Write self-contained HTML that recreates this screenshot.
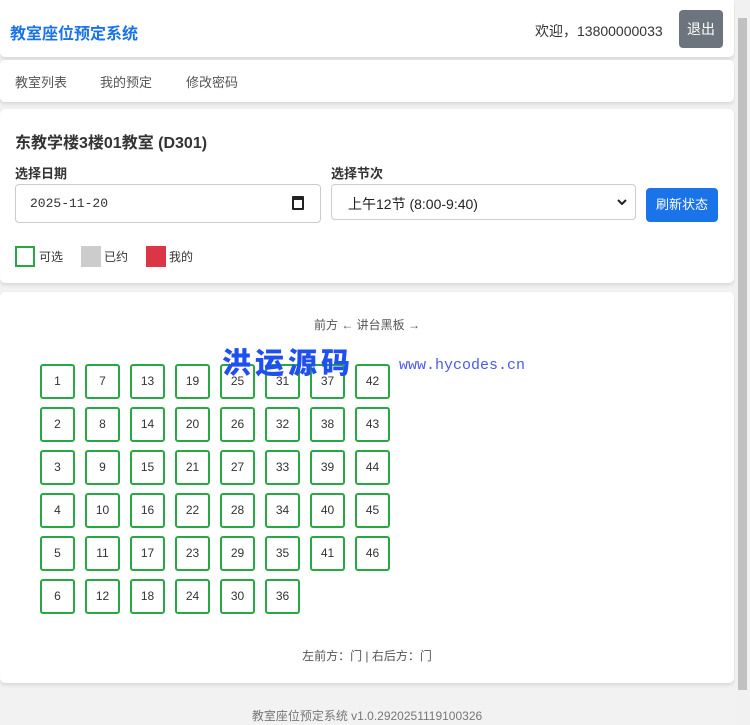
<!DOCTYPE html>
<html><head><meta charset="utf-8"><style>
*{box-sizing:border-box;margin:0;padding:0}
body{width:750px;height:725px;overflow:hidden;background:#f2f2f2;font-family:"Liberation Sans","Noto Sans CJK SC",sans-serif;color:#333;position:relative}
.card{position:absolute;left:0;width:734px;background:#fff;border-radius:5px;box-shadow:0 2px 4px rgba(0,0,0,.12)}
.sb{position:absolute;right:0;top:0;width:15px;height:725px;background:#f1f1f1}
.sb i{position:absolute;left:3px;top:18px;width:9px;height:672px;background:#c1c1c1}
.seat{position:absolute;width:35px;height:35px;border:2px solid #28a745;border-radius:3px;font-size:12px;text-align:center;line-height:31px;color:#333}
</style></head><body>
<div class="card" style="top:0;height:57px;border-radius:0 0 5px 5px">
 <div style="position:absolute;left:10px;top:20px;font-size:16px;font-weight:bold;color:#1a73e8">教室座位预定系统</div>
 <div style="position:absolute;left:535px;top:21px;font-size:14px;color:#333">欢迎，13800000033</div>
 <div style="position:absolute;left:679px;top:10px;width:44px;height:38px;background:#6c757d;border-radius:4px;color:#fff;font-size:14px;text-align:center;line-height:38px">退出</div>
</div>
<div class="card" style="top:60px;height:42px">
 <span style="position:absolute;left:15px;top:12px;font-size:13px;color:#555">教室列表</span>
 <span style="position:absolute;left:100px;top:12px;font-size:13px;color:#555">我的预定</span>
 <span style="position:absolute;left:186px;top:12px;font-size:13px;color:#555">修改密码</span>
</div>
<div class="card" style="top:109px;height:174px">
 <div style="position:absolute;left:15px;top:20px;font-size:16px;font-weight:bold;color:#333">东教学楼3楼01教室 (D301)</div>
 <div style="position:absolute;left:15px;top:54px;font-size:13px;font-weight:bold">选择日期</div>
 <div style="position:absolute;left:331px;top:54px;font-size:13px;font-weight:bold">选择节次</div>
 <div style="position:absolute;left:15px;top:75px;width:306px;height:39px;border:1px solid #ccc;border-radius:4px;font-family:'Liberation Mono',monospace;font-size:13px;padding:11px 14px">2025-11-20
  <span style="position:absolute;right:16px;top:11px;width:12px;height:14px;border:2px solid #222;border-top-width:4px;border-radius:1px"></span></div>
 <div style="position:absolute;left:331px;top:75px;width:305px;height:36px;border:1px solid #ccc;border-radius:4px;font-size:14px;padding:9px 16px;color:#222">上午12节 (8:00-9:40)<svg style="position:absolute;right:8px;top:13px" width="10" height="8" viewBox="0 0 10 8"><path d="M1 2L5 6L9 2" fill="none" stroke="#222" stroke-width="2"/></svg></div>
 <div style="position:absolute;left:646px;top:79px;width:72px;height:34px;background:#1a73e8;border-radius:4px;color:#fff;font-size:13px;text-align:center;line-height:34px">刷新状态</div>
 <div style="position:absolute;left:15px;top:137px;width:20px;height:21px;border:2px solid #28a745"></div>
 <span style="position:absolute;left:39px;top:139px;font-size:12px">可选</span>
 <div style="position:absolute;left:81px;top:137px;width:20px;height:21px;background:#ccc"></div>
 <span style="position:absolute;left:104px;top:139px;font-size:12px">已约</span>
 <div style="position:absolute;left:146px;top:137px;width:20px;height:21px;background:#dc3545"></div>
 <span style="position:absolute;left:169px;top:139px;font-size:12px">我的</span>
</div>
<div class="card" style="top:292px;height:391px">
 <div style="position:absolute;left:0;width:734px;top:24px;text-align:center;font-size:12px;color:#555">前方 ← 讲台黑板 →</div>
 <div style="position:absolute;left:0;width:734px;top:355px;text-align:center;font-size:12px;color:#555">左前方：门 | 右后方：门</div>
</div>
<div id="seats"></div>
<div style="position:absolute;left:222px;top:343px;font-size:29px;font-weight:900;color:#1f4ff0;letter-spacing:4px;font-family:'Noto Sans CJK SC',sans-serif;line-height:36px;z-index:2">洪运源码</div>
<div style="position:absolute;left:399px;top:357px;font-size:15px;color:#4a5ae8;font-family:'Liberation Mono',monospace;z-index:2">www.hycodes.cn</div>
<div style="position:absolute;left:0;width:734px;top:707px;text-align:center;font-size:12px;color:#777">教室座位预定系统 v1.0.2920251119100326</div>
<div class="sb"><i></i></div>
<script>
var h='',n=1;for(var c=0;c<8;c++){var rows=c<6?6:5;for(var r=0;r<rows;r++){h+='<div class="seat" style="left:'+(40+c*45)+'px;top:'+(364+r*43)+'px">'+n+'</div>';n++;}}
document.getElementById('seats').innerHTML=h;
</script>
</body></html>
